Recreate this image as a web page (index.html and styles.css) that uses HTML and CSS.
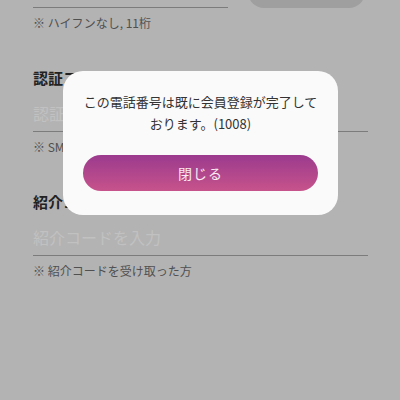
FILE: index.html
```html
<!DOCTYPE html>
<html lang="ja">

<head>
    <meta charset="UTF-8">
    <meta name="viewport" content="width=device-width, initial-scale=1.0">
    <title>会員登録</title>
    <link rel="stylesheet" href="styles.css">
</head>

<body>
    <div class="form">
        <div class="field-row">
            <div class="input-wrap">
                <input type="tel" class="input" placeholder="電話番号を入力">
            </div>
            <button class="send-btn" aria-label="認証番号を送信"></button>
        </div>
        <p class="note">※ ハイフンなし, 11桁</p>

        <div class="form-group">
            <label class="label" for="code">認証コード</label>
            <input type="text" id="code" class="input" placeholder="認証コードを入力">
            <p class="note">※ SMSで届いた認証コードを入力</p>
        </div>

        <div class="form-group">
            <label class="label" for="invite">紹介コード</label>
            <input type="text" id="invite" class="input" placeholder="紹介コードを入力">
            <p class="note">※ 紹介コードを受け取った方</p>
        </div>
    </div>

    <div class="modal">
        <p class="modal-text">この電話番号は既に会員登録が完了して<br>おります。(1008)</p>
        <button class="close-btn">閉じる</button>
    </div>
</body>

</html>
```

FILE: styles.css
```css
body {
    margin: 0;
    background-color: #b3b3b3;
    font-family: "Noto Sans CJK JP", "Noto Sans", sans-serif;
    color: #222;
}

.form {
    margin-top: -35px;
    padding: 0 32px 0 33px;
}

.field-row {
    display: flex;
    align-items: flex-end;
    gap: 20px;
}

.input-wrap {
    flex: 1;
}

.input {
    display: block;
    width: 100%;
    box-sizing: border-box;
    padding: 14px 0 8px;
    border: none;
    border-bottom: 1px solid #7c7c7c;
    background: transparent;
    font-family: inherit;
    font-size: 16px;
    line-height: 20px;
    color: #222;
    outline: none;
}

.input::placeholder {
    color: #c1c1c1;
}

.send-btn {
    width: 117px;
    height: 42px;
    margin-right: 3px;
    border: none;
    border-radius: 16px;
    background-color: #9f9f9f;
}

.note {
    margin: 6px 0 0;
    font-size: 12px;
    line-height: 18px;
    color: #505050;
}

.form-group {
    margin-top: 35px;
}

.label {
    display: block;
    font-size: 15px;
    line-height: 22px;
    font-weight: bold;
    color: #222;
}

.modal {
    position: absolute;
    top: 71px;
    left: 63px;
    width: 275px;
    box-sizing: border-box;
    padding: 20px 20px 24px;
    border-radius: 20px;
    background-color: #fafafa;
    text-align: center;
}

.modal-text {
    margin: 0;
    font-size: 13px;
    line-height: 22px;
    color: #333;
}

.close-btn {
    display: block;
    width: 100%;
    height: 36px;
    margin-top: 20px;
    border: none;
    border-radius: 18px;
    background: linear-gradient(to bottom, #9b3a8e, #c7538b);
    color: #f8eaf3;
    font-family: inherit;
    font-size: 14px;
    letter-spacing: 1px;
}
```
